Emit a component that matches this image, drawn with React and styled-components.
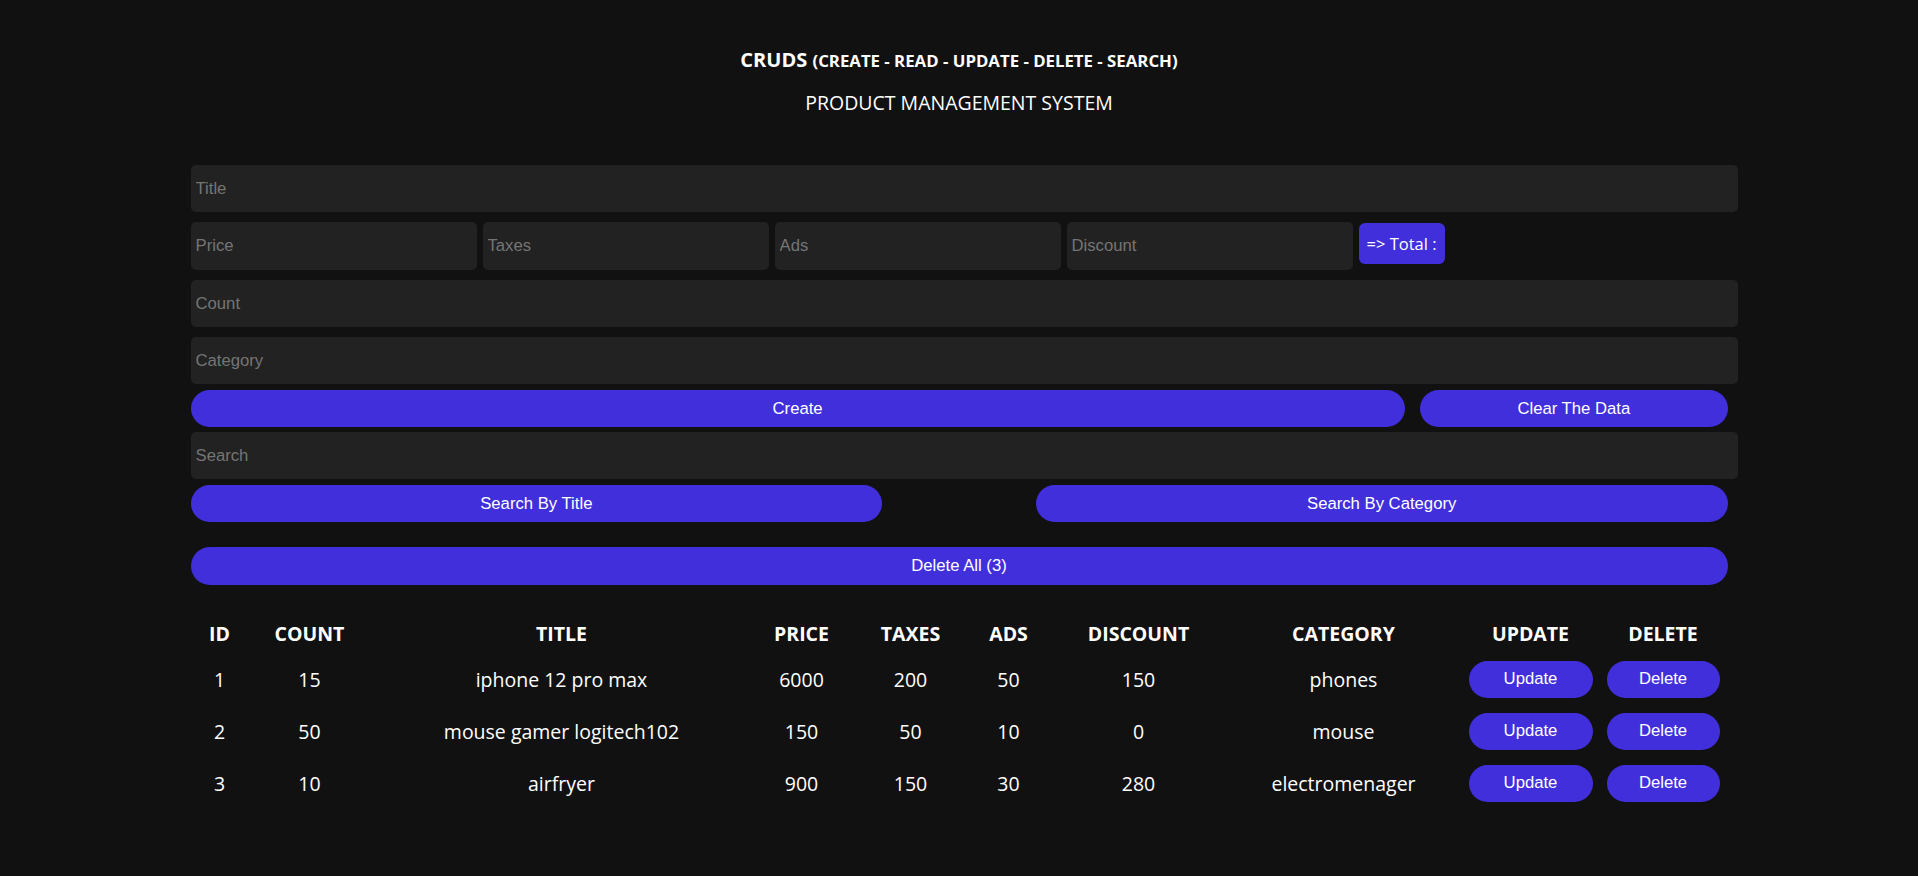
import styled, {createGlobalStyle} from 'styled-components'

const products = [
	{id: 1, count: 15, title: 'iphone 12 pro max', price: 6000, taxes: 200, ads: 50, discount: 150, category: 'phones'},
	{id: 2, count: 50, title: 'mouse gamer logitech102', price: 150, taxes: 50, ads: 10, discount: 0, category: 'mouse'},
	{id: 3, count: 10, title: 'airfryer', price: 900, taxes: 150, ads: 30, discount: 280, category: 'electromenager'},
]

const columns = [
	{label: 'ID', width: 58},
	{label: 'COUNT', width: 122},
	{label: 'TITLE', width: 382},
	{label: 'PRICE', width: 98},
	{label: 'TAXES', width: 120},
	{label: 'ADS', width: 76},
	{label: 'DISCOUNT', width: 184},
	{label: 'CATEGORY', width: 226},
	{label: 'UPDATE', width: 148},
	{label: 'DELETE', width: 117},
]

const App = () => {
	return (
		<>
			<GlobalStyle />
			<Crud>
				<Head>
					<h2>CRUDS <span>(CREATE - READ - UPDATE - DELETE - SEARCH)</span></h2>
					<p>PRODUCT MANAGEMENT SYSTEM</p>
				</Head>

				<Inputs>
					<Field type="text" placeholder="Title" />
					<Price>
						<Field type="number" placeholder="Price" />
						<Field type="number" placeholder="Taxes" />
						<Field type="number" placeholder="Ads" />
						<Field type="number" placeholder="Discount" />
						<Total>=&gt; Total :</Total>
					</Price>
					<Field type="number" placeholder="Count" />
					<Field type="text" placeholder="Category" />
				</Inputs>

				<ButtonRow $top={6}>
					<Btn $w="79%">Create</Btn>
					<Btn $w="20%">Clear The Data</Btn>
				</ButtonRow>

				<Search>
					<Field type="text" placeholder="Search" />
					<ButtonRow $top={6}>
						<Btn $w="45%">Search By Title</Btn>
						<Btn $w="45%">Search By Category</Btn>
					</ButtonRow>
				</Search>

				<DeleteAll>
					<Btn $w="100%">Delete All (3)</Btn>
				</DeleteAll>

				<Table>
					<colgroup>
						{columns.map(col => <col key={col.label} style={{width: col.width}} />)}
					</colgroup>
					<thead>
						<tr>
							{columns.map(col => <th key={col.label}>{col.label}</th>)}
						</tr>
					</thead>
					<tbody>
						{products.map(p => {
							return (
								<tr key={p.id}>
									<td>{p.id}</td>
									<td>{p.count}</td>
									<td>{p.title}</td>
									<td>{p.price}</td>
									<td>{p.taxes}</td>
									<td>{p.ads}</td>
									<td>{p.discount}</td>
									<td>{p.category}</td>
									<td><RowBtn $w={124}>Update</RowBtn></td>
									<td><RowBtn $w={113}>Delete</RowBtn></td>
								</tr>
							)
						})}
					</tbody>
				</Table>
			</Crud>
		</>
	)
}

export default App

const GlobalStyle = createGlobalStyle`
	*{
		box-sizing: border-box;
	}

	html, body{
		margin: 0;
		padding: 0;
		background: #111;
		color: #fff;
		font-family: "Open Sans", sans-serif;
		min-height: 100%;
	}
`

const blue = '#412fdb'

const Crud = styled.div`
	width: 1537px;
	margin: 0 auto;
	padding-top: 47px;
`

const Head = styled.div`
	text-align: center;

	h2{
		margin: 0;
		font-size: 20px;
		line-height: 25px;
		font-weight: 700;

		span{
			font-size: 16.8px;
		}
	}

	p{
		margin: 17px 0 0;
		font-size: 19.5px;
		line-height: 26px;
	}
`

const Inputs = styled.div`
	margin-top: 49px;
	display: flex;
	flex-direction: column;
	gap: 10px;
`

const Field = styled.input`
	display: block;
	width: calc(100% + 10px);
	height: 47px;
	padding: 5px;
	border: none;
	outline: none;
	border-radius: 5px;
	background: #222;
	color: #fff;
	font-family: "Liberation Sans", Arial, sans-serif;
	font-size: 16.7px;

	&::placeholder{
		color: #757575;
	}
`

const Price = styled.div`
	display: flex;
	align-items: flex-start;
	gap: 6px;

	${Field}{
		width: 286px;
		height: 48px;
	}
`

const Total = styled.small`
	display: flex;
	align-items: center;
	height: 41px;
	margin-top: 1px;
	padding: 0 8px;
	border-radius: 6px;
	background: ${blue};
	font-size: 16.5px;
`

const ButtonRow = styled.div`
	display: flex;
	justify-content: space-between;
	margin-top: ${p => p.$top}px;
`

const Btn = styled.button`
	display: block;
	width: ${p => p.$w};
	height: 37px;
	border: none;
	border-radius: 20px;
	background: ${blue};
	color: #fff;
	font-family: "Liberation Sans", Arial, sans-serif;
	font-size: 16.7px;
	cursor: pointer;
`

const Search = styled.div`
	margin-top: 5px;
`

const DeleteAll = styled.div`
	margin-top: 25px;

	${Btn}{
		height: 38px;
	}
`

const Table = styled.table`
	margin-top: 33px;
	width: 1531px;
	border-collapse: collapse;
	table-layout: fixed;
	text-align: center;
	font-size: 19.5px;

	th{
		height: 35px;
		padding: 0 0 5px;
		font-weight: 700;
	}

	td{
		height: 52px;
		padding: 0;
		vertical-align: middle;
	}
`

const RowBtn = styled.button`
	display: block;
	margin: 0 auto;
	width: ${p => p.$w}px;
	height: 37px;
	border: none;
	border-radius: 20px;
	background: ${blue};
	color: #fff;
	font-family: "Liberation Sans", Arial, sans-serif;
	font-size: 16.7px;
	cursor: pointer;
`
